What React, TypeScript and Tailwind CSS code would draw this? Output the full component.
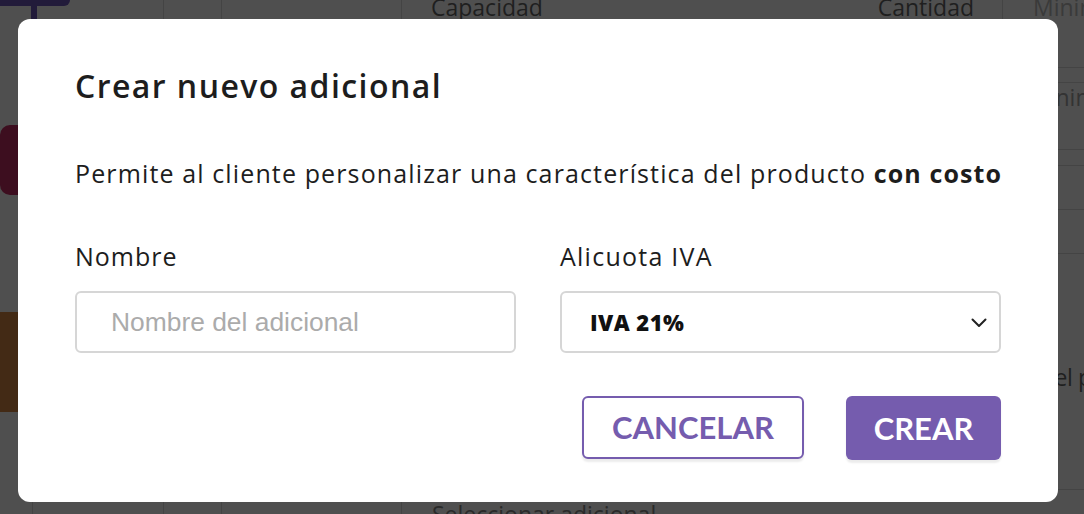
const body = { fontFamily: "'Open Sans', 'Noto Sans', sans-serif" };
const btn = { fontFamily: "Lato, 'Open Sans', sans-serif" };

const Backdrop = () => {
  return (
    <div className="flex h-full w-full flex-col bg-[#4f4f4f] text-[#1f1f1f]" style={body}>
      {/* top row of the table behind */}
      <div className="flex h-[19px] shrink-0 text-[23px] leading-none">
        <div className="w-[164px] shrink-0 border-r border-[#444]">
          <div className="h-[6px] w-[70px] rounded-br-[8px] bg-[#221b3a]" />
          <div className="ml-[31px] h-[13px] w-[6px] bg-[#221b3a]" />
        </div>
        <div className="w-[58px] shrink-0 border-r border-[#444]" />
        <div className="w-[180px] shrink-0 border-r border-[#444]" />
        <div className="flex w-[601px] shrink-0 items-start justify-between overflow-hidden border-r border-[#444] pl-[29px] pr-[28px]">
          <span className="-mt-[4px]">Capacidad</span>
          <span className="-mt-[4px]">Cantidad</span>
        </div>
        <div className="min-w-0 overflow-hidden pl-[30px] text-[#3a3a3a]">
          <span className="-mt-[4px] block whitespace-nowrap">Minimo</span>
        </div>
      </div>

      {/* middle band */}
      <div className="flex flex-1">
        <div className="flex w-[18px] flex-col">
          <div className="mt-[106px] h-[70px] rounded-l-[10px] bg-[#3d0e1f]" />
          <div className="mt-[117px] h-[100px] bg-[#432a15]" />
        </div>
        <div className="flex-1" />
        <div className="flex w-[26px] flex-col text-[23px] leading-none text-[#333]">
          <div className="mt-[48px] h-[16px] border-y border-[#444]" />
          <div className="-ml-[29px] mt-[3px] whitespace-nowrap">Minimo</div>
          <div className="mt-[40px] h-[17px] border-y border-[#444]" />
          <div className="mt-[43px] border-t border-[#444]" />
          <div className="mt-[43px] border-t border-[#444]" />
          <div className="-ml-[17px] mt-[112px] whitespace-nowrap tracking-[-0.02em] text-[#1f1f1f]">del p</div>
          <div className="mt-[100px] border-t border-[#444]" />
        </div>
      </div>

      {/* bottom row */}
      <div className="flex h-[12px] shrink-0 text-[23px] leading-none">
        <div className="w-[33px] shrink-0 border-r border-[#444]" />
        <div className="w-[131px] shrink-0 border-r border-[#444]" />
        <div className="w-[58px] shrink-0 border-r border-[#444]" />
        <div className="w-[180px] shrink-0 border-r border-[#444]" />
        <div className="overflow-hidden pl-[30px] text-[#2a2a2a]">
          <span className="mt-[1px] block whitespace-nowrap">Seleccionar adicional</span>
        </div>
      </div>
    </div>
  );
};

export default function App() {
  return (
    <div className="relative h-[514px] w-[1084px] overflow-hidden">
      <Backdrop />

      {/* Modal */}
      <div
        className="absolute left-[18px] top-[19px] flex h-[483px] w-[1040px] flex-col rounded-[12px] bg-white px-[57px] pt-[47px] text-[#1d1d1d]"
        style={body}
      >
        <h2 className="text-[32px] font-semibold leading-[40px] tracking-[0.045em]">Crear nuevo adicional</h2>

        <p className="mt-[52px] whitespace-nowrap text-[25px] leading-[30px] tracking-[0.045em]">
          Permite al cliente personalizar una característica del producto <b className="font-bold">con costo</b>
        </p>

        <div className="mt-[53px] grid grid-cols-2 gap-x-[44px]">
          <div className="flex flex-col">
            <label className="text-[25px] leading-[30px] tracking-[0.04em]">Nombre</label>
            <input
              placeholder="Nombre del adicional"
              className="mt-[20px] h-[62px] w-full rounded-[6px] border-2 border-[#d6d6d6] px-[34px] text-[26.4px] outline-none placeholder:text-[#ababab]"
              style={{ fontFamily: "'Liberation Sans', Arial, sans-serif" }}
            />
          </div>
          <div className="flex flex-col">
            <label className="text-[25px] leading-[30px] tracking-[0.05em]">Alicuota IVA</label>
            <div className="mt-[20px] flex h-[62px] items-center justify-between rounded-[6px] border-2 border-[#d6d6d6] pl-[28px] pr-[12px]">
              <span className="text-[22px] font-extrabold tracking-[0.02em] text-[#111]">IVA 21%</span>
              <svg width="16" height="10" viewBox="0 0 16 10" fill="none" className="mt-[2px]">
                <path d="M1.5 1.5 L8 8 L14.5 1.5" stroke="#222" strokeWidth="2" strokeLinecap="round" strokeLinejoin="round" />
              </svg>
            </div>
          </div>
        </div>

        <div className="mt-[43px] flex justify-end gap-[42px]" style={btn}>
          <button className="h-[63px] w-[222px] rounded-[6px] border-2 border-[#755cae] bg-white text-[31px] font-bold text-[#755cae] shadow-[0_3px_2px_rgba(0,0,0,0.08)]">
            CANCELAR
          </button>
          <button className="h-[64px] w-[155px] rounded-[6px] bg-[#755cae] text-[31px] font-bold text-white shadow-[0_3px_2px_rgba(0,0,0,0.08)]">
            CREAR
          </button>
        </div>
      </div>
    </div>
  );
}
